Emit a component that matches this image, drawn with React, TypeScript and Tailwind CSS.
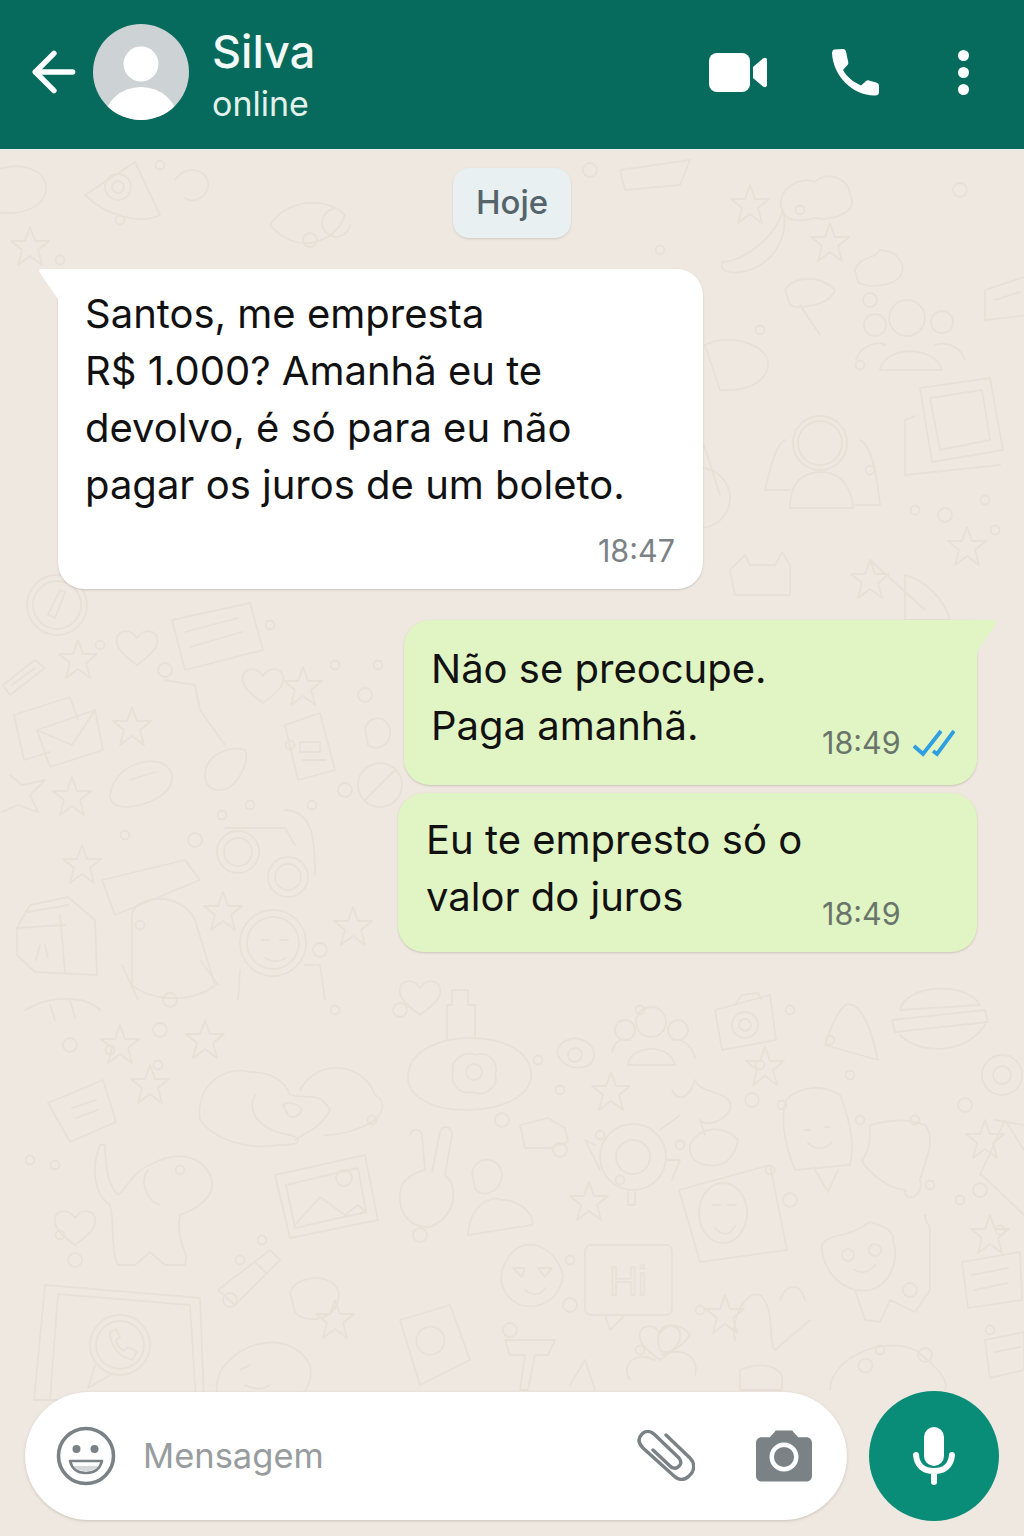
import { ArrowLeft } from "lucide-react";

const SANS = "font-['Inter','Liberation_Sans',Arial,sans-serif]";

type Spot = [number, number];

const DOTS: Spot[] = [
  [70, 1045], [110, 1050], [158, 1065], [160, 1030], [30, 1160], [55, 1165], [400, 1010], [372, 1120],
  [180, 1170], [75, 1260], [60, 1235], [240, 1260], [230, 1300], [262, 1240], [640, 1010], [420, 1235],
  [790, 1010], [860, 1120], [980, 1190], [560, 1090], [620, 1180], [910, 1290], [830, 1040], [100, 645],
  [165, 670], [222, 815], [125, 835], [195, 840], [250, 805], [290, 745], [345, 790], [312, 805],
  [335, 665], [365, 695], [378, 665], [270, 625], [170, 1000], [140, 925], [335, 1010], [320, 950],
  [760, 330], [800, 210], [960, 190], [120, 220], [60, 260], [310, 240], [160, 165], [660, 250],
  [590, 170], [870, 470], [915, 510], [945, 515], [985, 500], [995, 530], [870, 300], [860, 365],
  [782, 1105], [752, 1100], [770, 1170], [538, 1060], [502, 1120], [850, 1075], [915, 1120], [965, 1105],
  [930, 1185], [960, 1200], [790, 1200], [570, 1260], [700, 1310], [570, 1305], [1000, 1230], [880, 1350],
  [925, 1355], [990, 1330], [640, 1350], [510, 1330], [760, 1065], [680, 1145], [560, 1150], [600, 1135],
];

const STARS: Spot[] = [
  [30, 247], [78, 660], [132, 727], [72, 797], [303, 687], [223, 912], [82, 865], [353, 927], [120, 1045],
  [205, 1040], [150, 1085], [611, 1092], [765, 1067], [589, 1202], [725, 1315],
  [967, 547], [750, 205], [830, 243], [985, 1140], [990, 1235],
  [335, 1320], [870, 580],
];

const HEARTS: Spot[] = [
  [263, 683], [75, 1225], [137, 645], [660, 1340], [420, 995],
];

// faint line drawings behind the chat, each at its spot in the picture
function Wallpaper() {
  return (
    <svg className="absolute inset-0 h-full w-full" viewBox="0 150 1024 1386" fill="none" stroke="#e8e0d7" strokeWidth="1.800" strokeLinecap="round" strokeLinejoin="round" aria-hidden="true">
      {DOTS.map(([x, y], i) => (
        <circle key={i} cx={x} cy={y} r={i % 3 === 0 ? 7 : 4.500} />
      ))}
      {STARS.map(([x, y], i) => (
        <path key={i} transform={`translate(${x} ${y})`} d="M0-20 5-6 19-6 8 3 12 18 0 9-12 18-8 3-19-6-5-6Z" />
      ))}
      {HEARTS.map(([x, y], i) => (
        <path key={i} transform={`translate(${x} ${y})`} d="M0 20C-15 9-22 2-20-7-18-15-7-17 0-7 7-17 18-15 20-7 22 2 15 9 0 20Z" />
      ))}

      {/* top left: party hat face, blobs */}
      <path d="M85 195 135 162 160 215C140 225 105 215 85 195Z" />
      <circle cx="118" cy="187" r="13" />
      <circle cx="118" cy="187" r="6" />
      <path d="M-5 170C25 160 48 172 46 190 44 208 20 216-5 212" />
      <path d="M175 180C185 165 205 168 208 182 210 195 195 205 185 198" />
      <path d="M270 225C285 200 325 195 345 215 335 245 295 255 270 225Z" />
      <path d="M350 225A14 14 0 1 1 334 209" />
      <path d="M620 170 690 160 680 185 625 190Z" />

      {/* top right */}
      <path d="M782 210C775 190 800 175 815 182 825 170 850 178 850 195 860 210 835 222 815 218 800 222 785 222 782 210Z" />
      <path d="M722 262C740 262 775 240 783 210 790 240 770 268 740 272 728 274 720 270 722 262Z" />
      <path d="M855 270C860 255 875 260 880 250 895 250 905 262 902 272 900 285 870 290 858 282Z" />
      <path d="M785 290C795 275 820 275 835 290 830 305 800 310 790 305ZM800 305 820 335" />
      <circle cx="907" cy="318" r="18" />
      <circle cx="875" cy="325" r="11" />
      <circle cx="942" cy="322" r="11" />
      <path d="M880 370C885 345 935 345 942 370ZM856 360C860 345 880 340 885 345M935 345C950 340 962 350 965 360" />
      <path d="M705 345C725 335 760 340 768 360 770 380 750 392 720 390Z" />
      <path d="M985 290 1030 275V315L985 320ZM995 300 1020 292" />
      <circle cx="820" cy="443" r="27" />
      <circle cx="820" cy="443" r="22" />
      <path d="M790 508C790 480 805 472 822 472 842 472 852 490 853 508ZM785 440C775 445 770 470 765 490H790M860 440C870 445 876 465 880 505H855" />
      <path d="M920 388 990 378 1003 450 932 462Z" />
      <path d="M930 398 982 390 990 440 940 450Z" />
      <path d="M905 420V475L1000 465M905 420 915 416" />
      <path d="M700 468A30 30 0 1 1 700 528M704 445 720 495" />
      <path d="M730 570 745 555 750 565H775L782 552 790 565V595H735Z" />
      <path d="M870 560 925 610M905 575C925 580 945 600 950 620H905Z" />

      {/* left side */}
      <circle cx="57" cy="605" r="30" />
      <circle cx="57" cy="605" r="24" />
      <path d="M60 590 48 615 55 618 65 592Z" />
      <path d="M172 620 250 603 263 650 185 670Z" />
      <path d="M185 632 238 618M190 647 242 632" />
      <path d="M3 685 35 660 45 668 10 695ZM12 685 35 668" />
      <path d="M14 715 70 697 78 720 M14 715 24 760 50 752" />
      <path d="M37 730 95 710 103 750 50 767ZM37 730 72 745 95 710" />
      <path d="M165 680 195 685 200 710 225 745M110 795C115 765 150 755 165 765 178 775 175 795 140 805 120 810 110 805 110 795ZM130 780 155 772" />
      <path d="M205 775C205 755 230 745 245 750 250 765 235 790 220 790 210 790 205 785 205 775Z" />
      <path d="M285 725 320 713 335 770 298 780Z" />
      <path d="M300 742H320V752H300ZM303 760H325" />
      <path d="M365 728C370 715 385 715 390 728 392 745 378 752 368 745Z" />
      <circle cx="380" cy="785" r="22" />
      <path d="M365 800 395 770" />
      <circle cx="238" cy="852" r="21" />
      <circle cx="238" cy="852" r="14" />
      <circle cx="288" cy="877" r="20" />
      <circle cx="288" cy="877" r="13" />
      <path d="M225 828H285L295 845M285 810C310 812 315 830 315 875" />
      <path d="M102 880 185 860 200 880 115 915Z" />
      <path d="M132 915C135 895 180 890 195 920L215 985C190 1005 150 1000 132 985Z" />
      <path d="M122 965 138 1000M200 960 218 985" />
      <path d="M17 928 30 905 68 897 95 920 97 975 35 972 17 955Z" />
      <path d="M28 912 68 905M60 915 65 972M17 928 65 925" />
      <path d="M40 945 36 960M45 945 48 958" />
      <circle cx="273" cy="943" r="33" />
      <circle cx="273" cy="943" r="26" />
      <path d="M262 940H270M280 940H288M265 958C272 962 280 962 286 958M240 970 238 1000M305 965H320L325 1000" />
      <path d="M25 1010C50 995 85 995 100 1010M50 1005 55 1020M70 1000 75 1018" />
      <path d="M10 775 22 785 45 780 30 795 38 812 18 805 2 812" />

      {/* bottom left */}
      <path d="M48 1103 103 1080 116 1122 70 1142Z" />
      <path d="M72 1108 96 1100M76 1118 98 1110" />
      <path d="M200 1120C195 1085 225 1065 250 1072 270 1072 285 1080 290 1095M300 1090C320 1055 365 1065 375 1095 385 1100 385 1110 375 1120 360 1130 340 1135 325 1135M255 1095C245 1115 265 1132 290 1135 300 1138 305 1145 280 1145 245 1150 215 1140 200 1120M292 1095C305 1100 320 1090 330 1110 320 1130 300 1135 295 1140" />
      <path d="M283 1105C290 1100 300 1105 302 1110 300 1115 292 1120 288 1115Z" />
      <path d="M100 1145C90 1170 95 1195 110 1205 115 1225 110 1250 118 1265H135L150 1252 165 1265H185C190 1250 175 1245 180 1215 195 1210 220 1195 210 1175 200 1155 175 1150 150 1165 135 1170 125 1190 118 1195 108 1185 105 1165 105 1145Z" />
      <path d="M148 1170C140 1180 145 1200 160 1205" />
      <path d="M275 1175 365 1155 378 1220 290 1238Z" />
      <path d="M286 1185 358 1168 366 1212 295 1228Z" />
      <path d="M295 1225 320 1197 345 1215 358 1205 366 1212" />
      <circle cx="344" cy="1178" r="8" />
      <path d="M218 1290 270 1250 280 1260 235 1305ZM255 1262 265 1272" />
      <path d="M290 1292C300 1270 345 1275 338 1300 335 1320 305 1325 295 1312Z" />
      <path d="M45 1285 200 1298 204 1400H34Z" />
      <path d="M58 1294 190 1305 196 1400H50Z" />
      <circle cx="120" cy="1345" r="30" />
      <circle cx="120" cy="1345" r="24" />
      <path d="M95 1365 88 1388 112 1374M110 1332C110 1347 120 1357 132 1360L137 1352 128 1347 124 1351C120 1349 117 1345 116 1340L120 1337 116 1329Z" />
      <path d="M225 1365C250 1335 295 1335 310 1365 315 1390 295 1400 285 1410M225 1365C215 1375 215 1395 220 1405" />
      <path d="M240 1370 250 1365M245 1385C255 1390 262 1390 270 1385" />

      {/* middle and bottom right */}
      <path d="M408 1075C410 1050 440 1038 470 1038 505 1038 531 1052 531 1075 531 1095 505 1110 465 1110 430 1110 406 1095 408 1075Z" />
      <path d="M453 1072C450 1060 465 1050 475 1055 490 1050 500 1065 495 1075 500 1085 485 1098 472 1092 460 1095 450 1085 453 1072Z" />
      <circle cx="474" cy="1072" r="8" />
      <path d="M447 1040V1005H452V990H468V1005H475V1040" />
      <path d="M558 1055C555 1045 565 1040 575 1038 590 1040 597 1050 593 1060 590 1070 565 1072 558 1055Z" />
      <circle cx="575" cy="1055" r="7" />
      <path d="M520 1125 548 1118 565 1128 568 1142 550 1148 525 1148Z" />
      <circle cx="651" cy="1022" r="15" />
      <circle cx="625" cy="1030" r="10" />
      <circle cx="678" cy="1030" r="10" />
      <path d="M628 1065C630 1045 670 1042 675 1065ZM612 1052C615 1040 622 1038 630 1040M672 1040C682 1038 692 1045 695 1058" />
      <path d="M715 1010 770 995 776 1040 722 1050Z" />
      <path d="M735 1005 742 995 758 993 762 1000" />
      <circle cx="745" cy="1025" r="13" />
      <circle cx="745" cy="1025" r="6" />
      <path d="M825 1045C830 1030 835 1015 845 1005 860 1000 870 1025 878 1060Z" />
      <path d="M900 1010C905 985 965 980 980 1005ZM892 1020 985 1010 988 1022 895 1032ZM900 1035C920 1055 965 1055 985 1025" />
      <circle cx="1002" cy="1075" r="20" />
      <circle cx="1002" cy="1075" r="9" />
      <path d="M672 1090C680 1105 690 1095 695 1080 700 1095 735 1090 730 1110 720 1125 705 1125 700 1120L705 1135M690 1145C700 1125 725 1125 738 1140 735 1160 720 1168 708 1165 695 1165 688 1155 690 1145Z" />
      <path d="M786 1100C800 1085 825 1085 840 1095 850 1120 855 1145 850 1165L795 1170C785 1145 780 1120 786 1100ZM815 1170 828 1192 838 1170M805 1130H810M825 1127H830M808 1143C815 1150 825 1150 832 1142" />
      <path d="M870 1125C890 1120 905 1118 925 1125 937 1140 925 1160 920 1180 925 1195 905 1205 905 1190 890 1190 865 1170 862 1160 870 1150 870 1140 870 1125Z" />
      <circle cx="633" cy="1157" r="33" />
      <circle cx="633" cy="1157" r="17" />
      <path d="M595 1145 585 1140 600 1170M668 1160H680L672 1180M628 1192V1205H635V1192M660 1130 680 1115" />
      <path d="M410 1135C412 1128 420 1128 422 1135L425 1170M432 1172 440 1132C442 1125 452 1125 452 1135L445 1175C458 1185 458 1215 430 1227 405 1228 395 1205 402 1185 406 1178 415 1172 425 1170" />
      <path d="M472 1173C475 1155 500 1155 502 1175 500 1195 480 1198 475 1188ZM468 1235C470 1205 490 1195 502 1200 520 1200 535 1215 532 1225Z" />
      <path d="M510 1255C525 1235 555 1245 563 1275 560 1300 540 1310 520 1305 500 1295 495 1275 510 1255ZM513 1268H525L522 1277ZM538 1268H552L545 1277ZM525 1290C532 1296 540 1296 545 1288" />
      <rect x="585" y="1245" width="87" height="70" rx="6" />
      <path d="M605 1315 610 1330 625 1315" />
      <text x="628" y="1295" textAnchor="middle" fontSize="40" fontFamily="Liberation Sans" stroke="#e8e0d7" strokeWidth="1.500">Hi</text>
      <path d="M679 1190 770 1165 787 1250 700 1262Z" />
      <ellipse cx="723" cy="1213" rx="24" ry="30" />
      <path d="M712 1205H720M728 1205H736M715 1228C722 1236 730 1236 735 1226" />
      <path d="M822 1245C830 1232 845 1240 870 1222 880 1225 895 1230 893 1240 900 1260 890 1285 870 1290 840 1295 820 1265 822 1245ZM855 1290 865 1320 880 1322 890 1300 915 1312 930 1290V1230C930 1222 925 1225 925 1215" />
      <circle cx="848" cy="1255" r="6" />
      <circle cx="875" cy="1250" r="6" />
      <path d="M855 1270C862 1274 870 1272 875 1265" />
      <path d="M962 1262 1020 1252 1022 1300 968 1308Z" />
      <path d="M972 1275 1008 1268M975 1290 1008 1283" />
      <path d="M995 1120 1024 1125M980 1175 1005 1120 1024 1150M982 1175 1024 1215" />
      <path d="M735 1340C730 1320 745 1290 760 1295 775 1305 768 1345 775 1350L810 1320M780 1300C785 1285 800 1280 805 1300M740 1370C760 1362 775 1365 782 1375V1390H740Z" />
      <path d="M660 1350C650 1320 680 1320 690 1335 680 1350 665 1355 660 1350ZM662 1355C685 1345 700 1360 695 1375M655 1360C635 1350 620 1365 630 1380" />
      <path d="M505 1340H555L548 1355H535L528 1390H520L525 1355H510ZM570 1385 585 1360 595 1390" />
      <path d="M400 1320 450 1305 470 1360 420 1385ZM420 1350A14 14 0 1 1 421 1351" />
      <path d="M830 1390C830 1360 880 1335 915 1350 935 1365 950 1380 945 1390M860 1370A7 7 0 1 1 861 1371" />
      <path d="M985 1340 1024 1332V1370L990 1378ZM995 1352 1020 1347" />
    </svg>
  );
}

function Tail({ side }: { side: "left" | "right" }) {
  if (side === "left") {
    return (
      <svg className="absolute left-[-19px] top-0 h-[48px] w-[22px]" viewBox="0 0 22 48" aria-hidden="true">
        <path d="M22 0H3C0 0-.5 2 1 4L19 30V48H22Z" fill="#fff" />
      </svg>
    );
  }
  return (
    <svg className="absolute right-[-20px] top-0 h-[36px] w-[22px]" viewBox="0 0 22 36" aria-hidden="true">
      <path d="M0 0H18C21 0 22 2 21 4L3 30 2 36H0Z" fill="#e1f5c4" />
    </svg>
  );
}

function Ticks() {
  return (
    <svg className="h-[28px] w-[42px] shrink-0" viewBox="0 0 42 28" fill="none" stroke="#2f9fe0" strokeWidth="3.800" aria-hidden="true">
      <path d="M1 17 10 25 28 2" />
      <path d="M20 22 24 25 41 2" />
    </svg>
  );
}

function Meta({ time, read }: { time: string; read?: boolean }) {
  return (
    <div className="flex w-[133px] shrink-0 items-center gap-[12px] text-[30.5px] leading-[36px] text-[#69756a]">
      <span>{time}</span>
      {read ? <Ticks /> : null}
    </div>
  );
}

export default function App() {
  return (
    <div className={`relative flex h-[1536px] w-[1024px] flex-col overflow-hidden bg-[#efe8e1] ${SANS}`}>
      {/* Header */}
      <header className="relative z-10 flex h-[150px] shrink-0 items-center border-b border-[#e8f2ec] bg-[#066a5c] pb-[5px] pl-[22px] pr-[55px] text-white">
        <ArrowLeft className="h-[64px] w-[64px] shrink-0" strokeWidth={2} />
        <div className="ml-[7px] h-[96px] w-[96px] shrink-0 overflow-hidden rounded-full bg-[#cdd2d4]">
          <svg className="h-full w-full" viewBox="0 0 96 96" aria-hidden="true">
            <circle cx="48" cy="40" r="17.500" fill="#fff" />
            <ellipse cx="48" cy="97" rx="37" ry="34" fill="#fff" />
          </svg>
        </div>
        <div className="ml-[23px] flex flex-col pt-[12px]">
          <span className="text-[45px] font-medium leading-[52px] text-[#f1f8f5]">Silva</span>
          <span className="text-[34px] leading-[52px] text-[#e3f1ec]">online</span>
        </div>
        <div className="ml-auto flex items-center">
          <svg className="h-[39px] w-[58px]" viewBox="0 0 58 39" fill="#fff" aria-hidden="true">
            <rect x="0" y="0" width="41" height="39" rx="8" />
            <path d="M44 14 54 5.500C56 4 58 5 58 7V32C58 34 56 35 54 33.500L44 25Z" />
          </svg>
          <svg className="ml-[64px] h-[48px] w-[48px]" viewBox="0 0 48 48" fill="#fff" aria-hidden="true">
            <path d="M3 1.500Q1 2 1 5C2 28 22 48 44 47.500 47 47.500 48 46 48 44V38C48 36 47 35 45 34.500L38 32.500C36 32 35 33 34 34L30 37.500C22 34 16 29 12 22L16.500 17C17.500 16 17.500 15 17 13L15 3.500C14.500 2 13.500 1 12 1Z" />
          </svg>
          <div className="ml-[79px] flex flex-col gap-[6px]">
            <span className="h-[11px] w-[11px] rounded-full bg-white" />
            <span className="h-[11px] w-[11px] rounded-full bg-white" />
            <span className="h-[11px] w-[11px] rounded-full bg-white" />
          </div>
        </div>
      </header>

      {/* Chat */}
      <main className="relative flex min-h-0 flex-1 flex-col">
        <Wallpaper />
        <div className="relative flex flex-1 flex-col pt-[18px]">
          <div className="flex h-[70px] w-[118px] items-center justify-center self-center rounded-[16px] bg-[#e8f0f1] text-[33px] font-medium text-[#55646a] shadow-[0_1px_2px_rgba(120,110,90,0.25)]">
            Hoje
          </div>

          <div className="relative ml-[58px] mt-[31px] h-[320px] w-[645px] rounded-[26px] rounded-tl-none bg-white pl-[27px] pr-[28px] pt-[16px] text-[40px] leading-[57px] text-[#111] shadow-[0_1px_2px_rgba(120,110,90,0.3)]">
            <Tail side="left" />
            <p>
              Santos, me empresta
              <br />
              R$ 1.000? Amanhã eu te
              <br />
              devolvo, é só para eu não
              <br />
              pagar os juros de um boleto.
            </p>
            <p className="mt-[20px] text-right text-[30.5px] leading-[36px] text-[#7b8285]">18:47</p>
          </div>

          <div className="relative ml-[404px] mt-[31px] flex h-[165px] w-[573px] items-end justify-between rounded-[26px] rounded-tr-none bg-[#e1f5c4] pb-[24px] pl-[27px] pr-[22px] text-[40px] leading-[57px] text-[#111] shadow-[0_1px_2px_rgba(120,110,90,0.3)]">
            <Tail side="right" />
            <p className="self-start pt-[20px]">
              Não se preocupe.
              <br />
              Paga amanhã.
            </p>
            <Meta time="18:49" read />
          </div>

          <div className="relative ml-[398px] mt-[8px] flex h-[159px] w-[579px] items-end justify-between rounded-[26px] bg-[#e1f5c4] pb-[20px] pl-[28px] pr-[22px] text-[40px] leading-[57px] text-[#111] shadow-[0_1px_2px_rgba(120,110,90,0.3)]">
            <p className="self-start pt-[18px]">
              Eu te empresto só o
              <br />
              valor do juros
            </p>
            <Meta time="18:49" />
          </div>

          {/* Input bar */}
          <div className="mt-auto flex items-center pb-[15px] pl-[25px] pr-[25px]">
            <div className="flex h-[128px] w-[823px] items-center rounded-full bg-white pl-[31px] pr-[35px] shadow-[0_1px_3px_rgba(120,110,90,0.3)]">
              <svg className="h-[60px] w-[60px] shrink-0" viewBox="0 0 60 60" aria-hidden="true">
                <circle cx="30" cy="30" r="27.500" fill="none" stroke="#7a8286" strokeWidth="3.600" />
                <circle cx="20.500" cy="23" r="4" fill="#7a8286" />
                <circle cx="38.500" cy="23" r="4" fill="#7a8286" />
                <path d="M14 35H46C44 43 38 47 30 47 22 47 16 43 14 35Z" fill="#fff" stroke="#7a8286" strokeWidth="2.600" strokeLinejoin="round" />
                <path d="M18 40H42C40 44 36 45 30 45 24 45 20 44 18 40Z" fill="#d5d8d9" />
              </svg>
              <span className="ml-[27px] text-[34.5px] text-[#979c9e]">Mensagem</span>
              <svg className="ml-auto h-[52px] w-[58px] shrink-0" viewBox="0 0 58 50" fill="none" stroke="#7a8286" strokeWidth="3.400" strokeLinecap="round" strokeLinejoin="round" aria-hidden="true">
                <path d="M29 4 53 27C59 33 57 41 52 45 47 50 41 49 37 45L6 17C1 12 1 7 5 3 9-1 14 0 18 4L42 27C45 31 44 34 41 36 38 38 35 37 33 35L16 19" />
              </svg>
              <svg className="ml-[61px] h-[52px] w-[56px] shrink-0" viewBox="0 0 57 52" aria-hidden="true">
                <path d="M6 7H14L19 1.500C19.500.5 20 0 21 0H36C37 0 37.500.5 38 1.500L43 7H51C54 7 57 9 57 13V46C57 50 54 52 51 52H6C3 52 0 50 0 46V13C0 9 3 7 6 7Z" fill="#7a8286" />
                <circle cx="28.500" cy="27" r="12.500" fill="#7a8286" stroke="#fff" strokeWidth="4.500" />
              </svg>
            </div>
            <button className="ml-[22px] flex h-[130px] w-[130px] shrink-0 items-center justify-center rounded-full bg-[#0a8d78]">
              <svg className="h-[58px] w-[42px]" viewBox="0 0 42 58" fill="none" aria-hidden="true">
                <rect x="11" y="0" width="20" height="39" rx="10" fill="#fff" />
                <path d="M3 28C4 39 11 44 21 44 31 44 38 39 39 28M21 44V55" stroke="#fff" strokeWidth="6" strokeLinecap="round" />
              </svg>
            </button>
          </div>
        </div>
      </main>
    </div>
  );
}
